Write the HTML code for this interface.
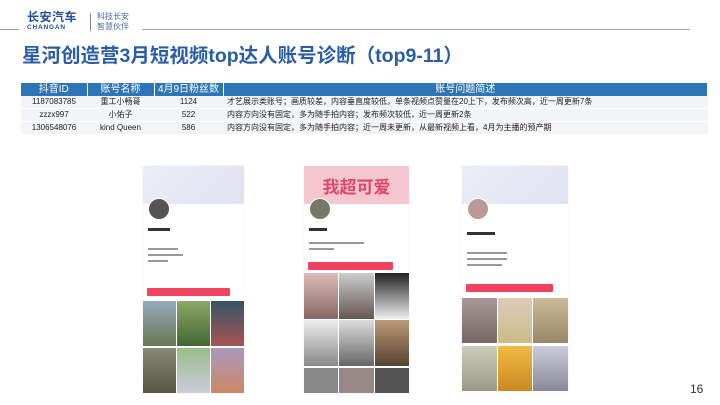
<!DOCTYPE html>
<html><head><meta charset="utf-8"><style>
*{margin:0;padding:0;box-sizing:border-box}
body{width:720px;height:405px;background:#fff;position:relative;overflow:hidden;font-family:"Liberation Sans","Noto Sans CJK SC",sans-serif}
.a{position:absolute}
table{border-collapse:collapse;position:absolute;left:21px;top:83px;width:687px;font-size:8px;color:#222;table-layout:fixed}
th{background:#2e75b6;color:#fff;font-weight:normal;font-size:10px;height:13px;line-height:13px;border-right:1px solid #fff;padding:0;white-space:nowrap;overflow:hidden}
td{height:12px;line-height:12px;background:#f2f4f8;text-align:center;padding:0;border-bottom:1px solid #fff;white-space:nowrap;overflow:hidden}
td.d{text-align:left;padding-left:4px}
.ph{position:absolute;top:166px;height:227px;background:#fff;overflow:hidden;box-shadow:0 0 1px #ddd}
.top{height:38px;background:linear-gradient(135deg,#eceef6,#dfe2ef)}
.av{position:absolute;top:32px;left:5px;width:22px;height:22px;border-radius:50%;background:#555;border:1px solid #fff}
.btn{position:absolute;left:4px;height:8px;background:#f0435f;border-radius:1px}
.grid{position:absolute;left:0;right:0;bottom:0;display:grid;grid-template-columns:1fr 1fr 1fr;gap:1px}
.grid div{height:45px}
.tx{position:absolute;left:5px;height:2px;background:#999}
</style></head><body>
<div class="a" style="left:27px;top:10px;font-size:12px;line-height:14px;font-weight:bold;color:#1d4f9c;letter-spacing:0.5px">长安汽车</div>
<div class="a" style="left:27px;top:24px;font-size:6.5px;line-height:7px;font-weight:bold;color:#1d4f9c;letter-spacing:0.8px">CHANGAN</div>
<div class="a" style="left:90px;top:13px;width:1px;height:18px;background:#889"></div>
<div class="a" style="left:97px;top:12px;font-size:8px;color:#4a6a9e;line-height:10px">科技长安<br>智慧伙伴</div>
<div class="a" style="left:0;top:29px;width:19px;height:1px;background:#999"></div>
<div class="a" style="left:142px;top:29px;width:548px;height:1px;background:#aaa"></div>
<div class="a" style="left:22px;top:39px;font-size:19.5px;font-weight:bold;color:#2a5da8;white-space:nowrap">星河创造营3月短视频top达人账号诊断（top9-11）</div>
<table>
<tr><th style="width:66px">抖音ID</th><th style="width:67px">账号名称</th><th style="width:69px">4月9日粉丝数</th><th>账号问题简述</th></tr>
<tr><td>1187083785</td><td>重工小畅哥</td><td>1124</td><td class="d">才艺展示类账号；画质较差，内容垂直度较低，单条视频点赞量在20上下，发布频次高，近一周更新7条</td></tr>
<tr><td>zzzx997</td><td>小佑子</td><td>522</td><td class="d">内容方向没有固定，多为随手拍内容；发布频次较低，近一周更新2条</td></tr>
<tr><td>1306548076</td><td>kind Queen</td><td>586</td><td class="d">内容方向没有固定，多为随手拍内容；近一周未更新，从最新视频上看，4月为主播的预产期</td></tr>
</table>

<div class="ph" style="left:143px;width:101px">
<div class="top"></div><div class="av"></div>
<div class="tx" style="top:62px;width:22px;height:3px;background:#333"></div>
<div class="tx" style="top:82px;width:30px"></div><div class="tx" style="top:88px;width:35px"></div><div class="tx" style="top:94px;width:20px"></div>
<div class="btn" style="top:122px;width:83px"></div>
<div class="grid" style="height:92px">
<div style="background:linear-gradient(#9ab,#675)"></div><div style="background:linear-gradient(#8a6,#463)"></div><div style="background:linear-gradient(#356,#a55)"></div>
<div style="background:linear-gradient(#887,#554)"></div><div style="background:linear-gradient(#9b8,#ccd)"></div><div style="background:linear-gradient(#a9b,#c86)"></div></div>
</div>

<div class="ph" style="left:304px;width:105px">
<div class="top" style="height:38px;background:#f3c6d0;color:#e0466a;font-size:17px;font-weight:bold;text-align:center;line-height:44px">我超可爱</div><div class="av" style="background:#776"></div>
<div class="tx" style="top:62px;width:18px;height:3px;background:#333"></div>
<div class="tx" style="top:76px;width:55px"></div><div class="tx" style="top:82px;width:25px"></div>
<div class="btn" style="top:96px;width:85px"></div>
<div class="grid" style="height:120px;grid-template-columns:1fr 1fr 1fr">
<div style="background:linear-gradient(#dbb,#866);height:46px"></div><div style="background:linear-gradient(#ccc,#655);height:46px"></div><div style="background:linear-gradient(#222,#eee);height:46px"></div>
<div style="background:linear-gradient(#eee,#888);height:46px"></div><div style="background:linear-gradient(#ddd,#666);height:46px"></div><div style="background:linear-gradient(#b97,#543);height:46px"></div>
<div style="background:#888;height:25px"></div><div style="background:#988;height:25px"></div><div style="background:#555;height:25px"></div></div>
</div>

<div class="ph" style="left:462px;width:106px">
<div class="top"></div><div class="av" style="background:#b99"></div>
<div class="tx" style="top:66px;width:28px;height:3px;background:#333"></div>
<div class="tx" style="top:86px;width:40px"></div><div class="tx" style="top:92px;width:40px"></div><div class="tx" style="top:98px;width:35px"></div>
<div class="btn" style="top:118px;width:87px"></div>
<div class="grid" style="height:95px">
<div style="background:linear-gradient(#a99,#766)"></div><div style="background:linear-gradient(#dcb,#cb8)"></div><div style="background:linear-gradient(#cb9,#986)"></div>
<div style="background:linear-gradient(#ccb,#998)"></div><div style="background:linear-gradient(#eb4,#c82)"></div><div style="background:linear-gradient(#ccd,#889)"></div></div>
</div>

<div class="a" style="left:690px;top:382px;font-size:12px;color:#333">16</div>
</body></html>
